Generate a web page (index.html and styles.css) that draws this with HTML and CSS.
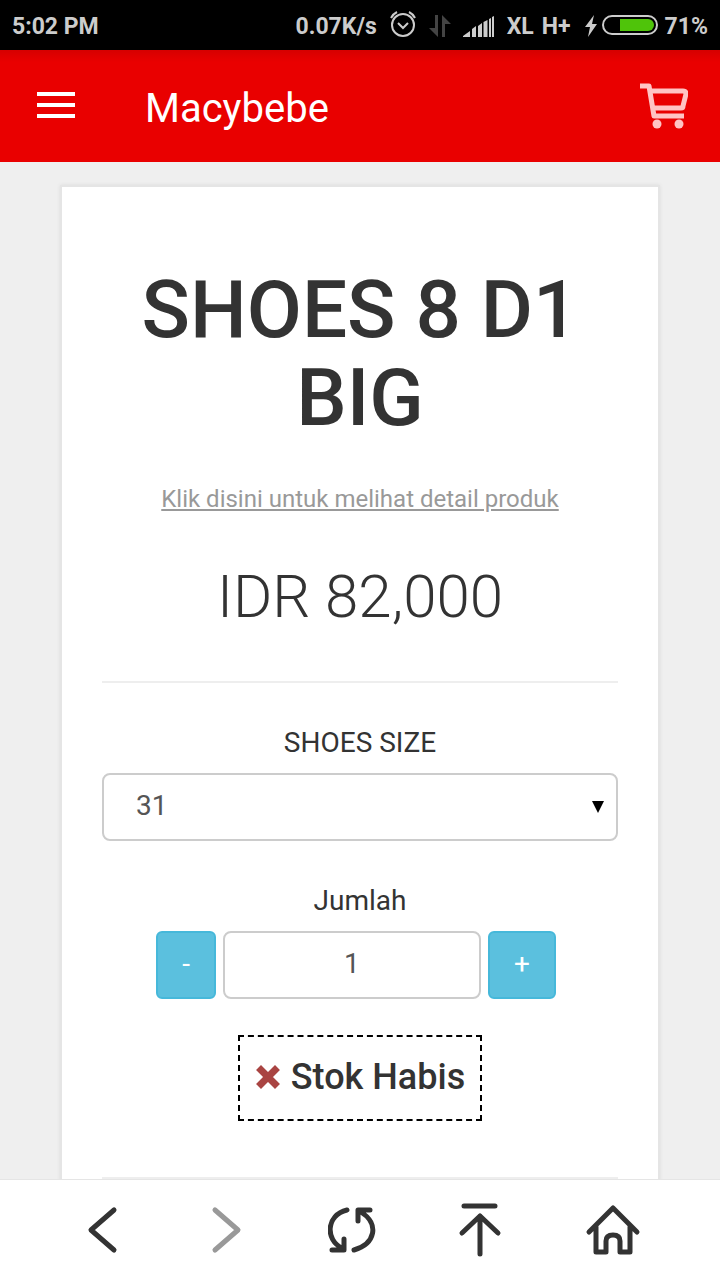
FILE: index.html
```
<!DOCTYPE html>
<html lang="id">

<head>
    <meta charset="UTF-8">
    <meta name="viewport" content="width=device-width, initial-scale=1.0">
    <title>Macybebe</title>
    <link rel="stylesheet" href="styles.css">
</head>

<body>

    <div class="status-bar">
        <span class="clock">5:02 PM</span>
        <span class="speed">0.07K/s</span>
        <svg class="alarm" width="28" height="28" viewBox="0 0 28 28" fill="none" stroke="#ccc" stroke-width="2">
            <circle cx="14" cy="15" r="11" />
            <path d="M9 13l5 5 5-5M2 8q2-4 6-6M26 8q-2-4-6-6" />
        </svg>
        <svg class="transfer" width="22" height="22" viewBox="0 0 22 22" fill="#444">
            <path d="M6 0h3v22L0 13h6zM13 22h3V9h6L13 0z" />
        </svg>
        <svg class="signal" width="32" height="22" viewBox="0 0 32 22" fill="#ccc">
            <path d="M0 22v-1l7-5v6zM9 22v-8l4-3v11zM15 22V11l4-3v14zM20.500 22V7l4-2v17zM26 22V4l2-1v19zM29 22V2l2-1v21z" />
        </svg>
        <span class="carrier">XL</span>
        <span class="network">H+</span>
        <svg class="bolt" width="12" height="22" viewBox="0 0 12 22" fill="#ccc">
            <path d="M9 0L0 12h5L3 22l9-13H7z" />
        </svg>
        <svg class="battery" width="56" height="20" viewBox="0 0 56 20">
            <rect x="1" y="1" width="54" height="18" rx="9" fill="none" stroke="#ccc" stroke-width="2" />
            <path d="M18 4h28a6 6 0 0 1 0 12H18z" fill="#4fc40a" />
        </svg>
        <span>71%</span>
    </div>

    <header class="navbar">
        <button type="button" class="icon-btn" aria-label="Menu">
            <svg width="38" height="28" viewBox="0 0 38 28" fill="#fff">
                <path d="M0 0h38v4H0zM0 11h38v4H0zM0 22h38v4H0z" />
            </svg>
        </button>
        <a href="#" class="brand">Macybebe</a>
        <button type="button" class="icon-btn" aria-label="Keranjang">
            <svg width="48" height="46" viewBox="0 0 48 46" fill="none" stroke="#ffc4c4" stroke-width="4">
                <path d="M0 3h9l5 30h30" stroke-width="5" stroke-linejoin="round" />
                <path d="M11 8h32q3 0 3 3l-3 12q0 2-2 2H14" stroke-width="5" />
                <circle cx="17" cy="41" r="4.500" fill="#ffc4c4" stroke="none" />
                <circle cx="39" cy="41" r="4.500" fill="#ffc4c4" stroke="none" />
            </svg>
        </button>
    </header>

    <main class="content">
        <div class="product">
            <h1>SHOES 8 D1 BIG</h1>
            <a href="#" class="detail-link">Klik disini untuk melihat detail produk</a>
            <p class="price">IDR 82,000</p>
            <hr>
            <form class="order-form">
                <label for="size">SHOES SIZE</label>
                <div class="select-wrap">
                    <select id="size" name="size">
                        <option>31</option>
                    </select>
                    <svg class="caret" width="12" height="12" viewBox="0 0 12 12">
                        <path d="M0 0h12L6 12z" />
                    </svg>
                </div>

                <label for="qty">Jumlah</label>
                <div class="qty">
                    <button type="button" class="btn-minus">-</button>
                    <input type="text" id="qty" name="qty" value="1">
                    <button type="button" class="btn-plus">+</button>
                </div>
            </form>

            <div class="stock">
                <svg width="26" height="26" viewBox="0 0 26 26" stroke="#a94442" stroke-width="7" stroke-linecap="square">
                    <path d="M6 6l14 14M20 6L6 20" />
                </svg>
                <span>Stok Habis</span>
            </div>
            <hr>
        </div>
    </main>

    <nav class="browser-bar">
        <button type="button" class="icon-btn" aria-label="Back">
            <svg width="56" height="56" viewBox="0 0 56 56">
                <path d="M43 8L20 28l23 20" />
            </svg>
        </button>
        <button type="button" class="icon-btn" aria-label="Forward" disabled>
            <svg width="56" height="56" viewBox="0 0 56 56">
                <path d="M15 8l23 20-23 20" />
            </svg>
        </button>
        <button type="button" class="icon-btn" aria-label="Reload">
            <svg width="56" height="56" viewBox="0 0 56 56">
                <path d="M19 8C-2 13-3 38 14 46M4 48h12V37M26 48c21-6 26-26 7-38M30 19V8h12" />
            </svg>
        </button>
        <button type="button" class="icon-btn" aria-label="Top">
            <svg width="56" height="56" viewBox="0 0 56 56">
                <path d="M7 4h31M23 52V14M5 31l18-17 18 17" />
            </svg>
        </button>
        <button type="button" class="icon-btn" aria-label="Home">
            <svg width="56" height="56" viewBox="0 0 56 56">
                <path d="M4 30L28 6l24 24M11 25v25h10V39q0-6 7-6t7 6v11h10V25" />
            </svg>
        </button>
    </nav>

</body>

</html>
```
FILE: styles.css
```
* {
    box-sizing: border-box;
}

body {
    font-family: Roboto, sans-serif;
    background-color: #efefef;
    color: #333;
    margin: 0;
    height: 100vh;
    display: flex;
    flex-direction: column;
}

svg {
    display: block;
    flex-shrink: 0;
}

.status-bar {
    display: flex;
    align-items: center;
    flex-shrink: 0;
    height: 50px;
    padding: 2px 12px 0;
    background-color: #000;
    color: #ccc;
    font-size: 23px;
    font-weight: 700;
}

.clock {
    margin-right: auto;
}

.alarm {
    margin-left: 12px;
    margin-bottom: 4px;
}

.transfer,
.signal,
.carrier {
    margin-left: 12px;
}

.network {
    margin-left: 8px;
}

.bolt {
    margin-left: 14px;
}

.battery {
    margin-left: 5px;
    margin-right: 7px;
    margin-bottom: 2px;
}

.icon-btn {
    padding: 0;
    border: none;
    background: none;
    cursor: pointer;
}

.navbar {
    display: flex;
    align-items: center;
    flex-shrink: 0;
    height: 112px;
    padding: 0 32px 0 37px;
    background: linear-gradient(#d60000, #e90000 12px);
}

.brand {
    flex: 1;
    margin-left: 70px;
    padding-top: 4px;
    color: #fff;
    font-size: 40px;
    text-decoration: none;
}

.content {
    flex: 1;
    min-height: 0;
    overflow: hidden;
    padding: 23px 60px 0;
}

.product {
    padding: 79px 40px 40px;
    border: 2px solid #e5e5e5;
    background-color: #fff;
    box-shadow: 0 0 4px rgba(0, 0, 0, 0.08);
    text-align: center;
}

.product h1 {
    margin: 0 0 41px;
    font-size: 80px;
    font-weight: 500;
    line-height: 88px;
}

.detail-link {
    display: block;
    color: #999;
    font-size: 24px;
    line-height: 32px;
}

.price {
    margin: 48px 0 50px;
    font-size: 60px;
    font-weight: 300;
    line-height: 68px;
}

.product hr {
    margin: 0;
    border: none;
    border-top: 2px solid #eee;
}

.order-form {
    padding-top: 40px;
    font-size: 28px;
}

.order-form label {
    display: block;
    margin-bottom: 10px;
    line-height: 40px;
}

.select-wrap {
    position: relative;
    margin-bottom: 40px;
}

.order-form select,
.order-form input {
    width: 100%;
    height: 68px;
    border: 2px solid #ccc;
    border-radius: 8px;
    background-color: #fff;
    color: #555;
    font-family: inherit;
    font-size: 28px;
}

.order-form select {
    appearance: none;
    padding: 0 32px 4px;
}

.caret {
    position: absolute;
    right: 14px;
    top: 28px;
    pointer-events: none;
}

.qty {
    display: flex;
    justify-content: center;
    gap: 7px;
    padding-right: 8px;
}

.order-form .qty input {
    width: 258px;
    padding: 0 0 4px;
    text-align: center;
}

.qty button {
    height: 68px;
    padding: 0 24px 4px;
    border: 2px solid #46b8da;
    border-radius: 6px;
    background-color: #5bc0de;
    color: #fff;
    font-family: inherit;
    font-size: 28px;
    cursor: pointer;
}

.stock {
    display: flex;
    align-items: center;
    gap: 10px;
    width: fit-content;
    height: 86px;
    margin: 36px auto 56px;
    padding: 0 15px 2px;
    border: 2px dashed #000;
    font-size: 36px;
    font-weight: 500;
}

.browser-bar {
    display: flex;
    justify-content: space-between;
    align-items: center;
    flex-shrink: 0;
    height: 101px;
    padding: 0 79px 0 71px;
    border-top: 1px solid #e5e5e5;
    background-color: #fff;
}

.browser-bar svg {
    fill: none;
    stroke: #333;
    stroke-width: 5;
    stroke-linecap: round;
    stroke-linejoin: round;
}

.browser-bar button:disabled svg {
    stroke: #999;
}
```
